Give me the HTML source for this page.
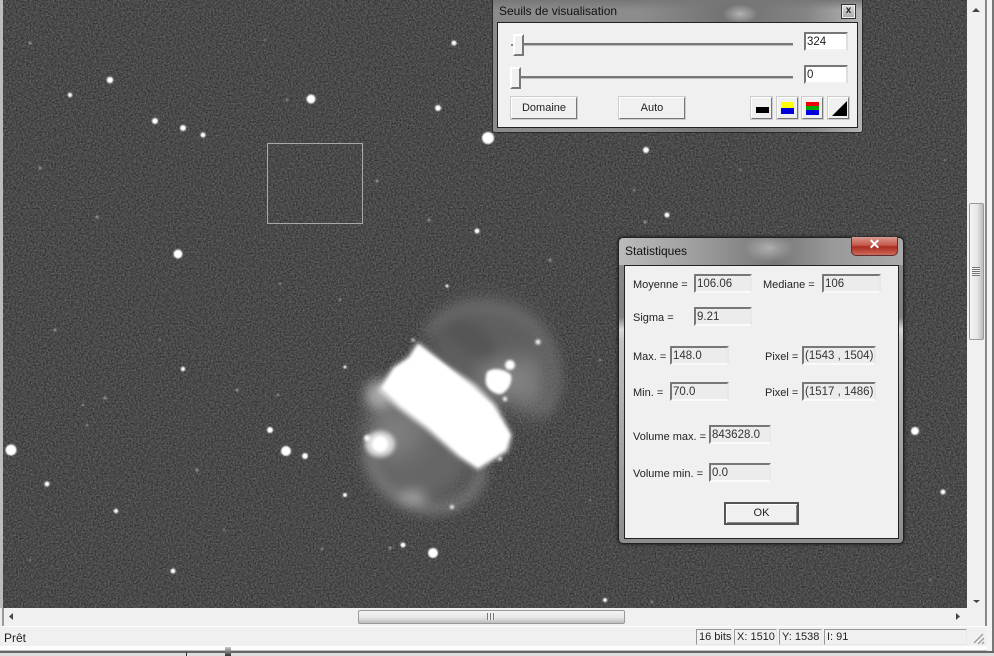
<!DOCTYPE html>
<html><head><meta charset="utf-8"><style>
html,body{margin:0;padding:0;background:#fff}
#r{position:relative;width:994px;height:656px;overflow:hidden;background:#eee;font:11px "Liberation Sans",sans-serif;color:#222}
#r div{position:absolute;box-sizing:border-box}
.t{white-space:nowrap;line-height:14px}
.l{margin-top:1px}
.f{border:2px solid;border-color:#777 #e8e8e8 #fafafa #777;background:#ececec;line-height:17px;font-size:11.5px;padding-left:1px;white-space:nowrap;overflow:hidden;color:#333}
.e{border:2px solid;border-color:#777 #ddd #f2f2f2 #777;background:#fff;line-height:17px;font-size:11.5px;padding-left:1px}
.b{background:#f0f0f0;border:2px solid;border-color:#fff #777 #777 #fff;outline:1px solid #ccc;outline-offset:-1px;text-align:center;line-height:21px}
.tk{background:#777;border-bottom:1px solid #bbb;height:3px}
.th{background:#f0f0f0;border:2px solid;border-color:#fff #777 #777 #fff;}
.p{background:#f0f0f0;border:1px solid #222}
.s{border:1px solid;border-color:#999 #e8e8e8 #e8e8e8 #999;line-height:15px;font-size:11px;padding-left:2px;overflow:hidden;white-space:nowrap;color:#222}
</style></head><body><div id="r">
<svg width="994" height="656" style="position:absolute;left:0;top:0">
<defs>
<filter id="n" x="0" y="0" width="100%" height="100%" color-interpolation-filters="sRGB">
<feTurbulence type="fractalNoise" baseFrequency="0.6" numOctaves="2" seed="4"/>
<feColorMatrix type="matrix" values="0.8 0.1 0.1 0 0 0.8 0.1 0.1 0 0 0.8 0.1 0.1 0 0 0 0 0 0 1"/>
<feComponentTransfer><feFuncR type="linear" slope="0.42" intercept="0.08"/><feFuncG type="linear" slope="0.42" intercept="0.08"/><feFuncB type="linear" slope="0.42" intercept="0.08"/></feComponentTransfer>
</filter>
<filter id="b1" x="-20%" y="-20%" width="140%" height="140%"><feGaussianBlur stdDeviation="1.2"/></filter>
<filter id="b03" x="-5%" y="-5%" width="110%" height="110%"><feGaussianBlur stdDeviation="0.7"/></filter>
<filter id="b2" x="-30%" y="-30%" width="160%" height="160%"><feGaussianBlur stdDeviation="2.5"/></filter>
<filter id="b5" x="-30%" y="-30%" width="160%" height="160%"><feGaussianBlur stdDeviation="6"/></filter>
<filter id="b9" x="-60%" y="-60%" width="220%" height="220%"><feGaussianBlur stdDeviation="11"/></filter>
</defs>
<rect x="2" y="0" width="965" height="608" fill="#4a4a4a"/>
<rect x="2" y="0" width="965" height="608" filter="url(#n)"/>
<g fill="#999" filter="url(#b03)">
<circle cx="30" cy="43" r="1.5"/><circle cx="97" cy="217" r="1.5"/><circle cx="40" cy="168" r="1.5"/><circle cx="287" cy="100" r="1.2"/><circle cx="377" cy="181" r="1.5"/><circle cx="429" cy="220" r="1.5"/><circle cx="645" cy="222" r="1.5"/><circle cx="550" cy="260" r="1.5"/><circle cx="280" cy="284" r="1.2"/><circle cx="278" cy="395" r="1.2"/><circle cx="83" cy="405" r="1.2"/><circle cx="105" cy="398" r="1.5"/><circle cx="55" cy="330" r="1.5"/><circle cx="237" cy="390" r="1.5"/><circle cx="197" cy="470" r="1.5"/><circle cx="390" cy="548" r="1.5"/><circle cx="322" cy="549" r="1.2"/><circle cx="652" cy="602" r="1.2"/><circle cx="634" cy="190" r="1.2"/><circle cx="340" cy="300" r="1.2"/><circle cx="87" cy="425" r="1.2"/><circle cx="265" cy="40" r="1"/><circle cx="160" cy="340" r="1"/><circle cx="224" cy="530" r="1"/><circle cx="560" cy="120" r="1"/><circle cx="30" cy="560" r="1"/><circle cx="600" cy="360" r="1.2"/><circle cx="590" cy="500" r="1"/><circle cx="945" cy="160" r="1"/><circle cx="930" cy="580" r="1"/><circle cx="740" cy="170" r="1"/>
</g>
<g fill="#fff" filter="url(#b03)">
<circle cx="110" cy="80" r="3.2"/><circle cx="70" cy="95" r="2.2"/><circle cx="155" cy="121" r="3"/><circle cx="183" cy="128" r="3"/><circle cx="203" cy="135" r="2.5"/><circle cx="311" cy="99" r="4.5"/><circle cx="454" cy="43" r="2.5"/><circle cx="438" cy="108" r="3"/><circle cx="488" cy="138" r="6"/><circle cx="646" cy="150" r="3"/><circle cx="178" cy="254" r="4.5"/><circle cx="477" cy="231" r="2.5"/><circle cx="667" cy="215" r="2.5"/><circle cx="11" cy="450" r="5.5"/><circle cx="47" cy="484" r="2.5"/><circle cx="116" cy="511" r="2.2"/><circle cx="270" cy="430" r="3"/><circle cx="286" cy="451" r="5"/><circle cx="305" cy="456" r="3"/><circle cx="183" cy="369" r="2.2"/><circle cx="345" cy="495" r="2"/><circle cx="403" cy="545" r="2.5"/><circle cx="433" cy="553" r="5"/><circle cx="173" cy="571" r="2.5"/><circle cx="605" cy="600" r="2"/><circle cx="915" cy="431" r="4"/><circle cx="943" cy="492" r="2.5"/><circle cx="447" cy="286" r="1.5"/><circle cx="345" cy="367" r="1.5"/>
</g>
<!-- nebula: diffuse lobes -->
<g filter="url(#b9)">
<ellipse cx="490" cy="352" rx="60" ry="54" fill="#5e5e5e"/>
<ellipse cx="420" cy="456" rx="52" ry="48" fill="#666"/>
<ellipse cx="395" cy="430" rx="28" ry="28" fill="#7d7d7d"/>
<ellipse cx="530" cy="385" rx="18" ry="30" fill="#7d7d7d"/>
<ellipse cx="500" cy="380" rx="20" ry="20" fill="#858585"/>
</g>
<g filter="url(#b5)">
<ellipse cx="470" cy="338" rx="28" ry="14" fill="#545454" transform="rotate(30 470 338)"/>
<path d="M428 335C440 305 490 298 525 320C560 345 565 395 540 415" fill="none" stroke="#707070" stroke-width="8"/>
<path d="M368 450C375 490 410 510 440 508C465 505 480 490 482 468" fill="none" stroke="#808080" stroke-width="9"/>
<ellipse cx="380" cy="395" rx="15" ry="15" fill="#a8a8a8"/>
<ellipse cx="412" cy="497" rx="14" ry="7" fill="#a0a0a0"/>
</g>
<g filter="url(#b2)">
<ellipse cx="380" cy="444" rx="15" ry="13" fill="#dcdcdc"/>
<polygon points="418,342 445,364 475,384 496,405 512,435 508,451 478,470 457,456 427,430 397,408 378,390 392,368 408,357" fill="#ddd"/>
</g>
<g filter="url(#b1)" fill="#fff">
<polygon points="418,345 445,365 470,385 492,405 510,435 505,450 478,467 460,455 430,428 400,405 382,388 395,368 410,358"/>
<path d="M487 372c6-5 18-3 24 3c2 8-4 17-10 19c-5 1-13-4-15-10c-1-5 0-9 1-12z"/>
<circle cx="510" cy="365" r="5"/>
<circle cx="380" cy="444" r="8"/>
<circle cx="367" cy="438" r="3"/>
<circle cx="505" cy="399" r="2.2"/>
<circle cx="538" cy="342" r="2.5"/>
<circle cx="500" cy="459" r="1.8"/>
<circle cx="452" cy="507" r="2"/>
<circle cx="413" cy="340" r="1.5"/>
</g>
<rect x="267.500" y="143.500" width="95" height="80" fill="none" stroke="#a8a8a8"/>
</svg>

<!-- window frame -->
<div style="left:0;top:0;width:3px;height:608px;background:#bcbcbc"></div>
<div style="left:967px;top:0;width:18px;height:609px;background:#f0f0f0"></div>
<div style="left:985px;top:0;width:2px;height:646px;background:#8a8a8a"></div>
<div style="left:987px;top:0;width:5px;height:650px;background:#f4f4f4"></div>
<div style="left:992px;top:0;width:2px;height:656px;background:#777"></div>
<div style="left:969px;top:203px;width:15px;height:137px;border:1px solid #999;border-radius:2px;background:linear-gradient(90deg,#f4f4f4,#e6e6e6 55%,#bbb)"></div>
<div style="left:972px;top:267px;width:8px;height:9px;background:repeating-linear-gradient(#777 0 1px,#eee 1px 2px)"></div>
<svg width="994" height="656" style="position:absolute;left:0;top:0;pointer-events:none">
<path d="M972 12l4-4 4 4z" fill="#444"/><path d="M973 600l3.500 3 3.500-3z" fill="#444"/>
</svg>
<div style="left:3px;top:608px;width:982px;height:18px;background:#f0f0f0"></div>
<svg width="994" height="30" style="position:absolute;left:0;top:606px">
<path d="M13 7v7l-4-3.500z" fill="#444"/><path d="M956 7v7l4-3.500z" fill="#444"/>
</svg>
<div style="left:358px;top:610px;width:267px;height:14px;border:1px solid #999;border-radius:2px;background:linear-gradient(#f4f4f4,#e6e6e6 55%,#bbb)"></div>
<div style="left:487px;top:613px;width:8px;height:7px;background:repeating-linear-gradient(90deg,#777 0 1px,#eee 1px 3px)"></div>
<div style="left:1px;top:626px;width:986px;height:20px;background:#f0f0f0;border-top:1px solid #fff"></div>
<div style="left:2px;top:608px;width:2px;height:18px;background:#999"></div>
<div style="left:0;top:646px;width:987px;height:5px;background:#fdfdfd;border-bottom:1px solid #bbb"></div>
<div style="left:0;top:651px;width:994px;height:2px;background:#666"></div>
<div style="left:0;top:653px;width:994px;height:3px;background:#ddd"></div>
<div style="left:186px;top:652px;width:1px;height:4px;background:#333"></div>
<div style="left:225px;top:647px;width:6px;height:9px;background:linear-gradient(#ccc,#333)"></div>
<div class="t l" style="left:4px;top:630px;font-size:12px">Prêt</div>
<div class="s" style="left:696px;top:629px;width:36px;height:16px">16 bits</div>
<div class="s" style="left:734px;top:629px;width:43px;height:16px">X: 1510</div>
<div class="s" style="left:779px;top:629px;width:43px;height:16px">Y: 1538</div>
<div class="s" style="left:824px;top:629px;width:143px;height:16px">I: 91</div>
<svg width="20" height="20" style="position:absolute;left:968px;top:628px"><path d="M6 15l9-9M10 16l6-6M14 16l2-2" stroke="#999" stroke-width="1.300"/></svg>

<!-- Dialog 1 -->
<div style="left:492px;top:-4px;width:371px;height:137px;border:1px solid #2a2a2a;border-radius:3px;background:linear-gradient(90deg,#8a8a8a,#8c8c8c 40%,#707070 65%,#858585 85%,#b5b5b5)"></div>
<div style="left:493px;top:0;width:369px;height:22px;background:radial-gradient(ellipse 18px 10px at 247px 14px,rgba(220,220,220,.6),transparent),linear-gradient(#777,transparent 45%)"></div>
<div class="t" style="left:499px;top:4px;font-size:12px;color:#111">Seuils de visualisation</div>
<div style="left:841px;top:4px;width:15px;height:15px;border:1px solid #333;background:linear-gradient(#ddd,#aaa);box-shadow:inset 0 0 0 1px #eee;text-align:center;font:bold 10px/12px 'Liberation Sans',sans-serif;color:#222">x</div>
<div class="p" style="left:497px;top:22px;width:361px;height:106px"></div>
<div class="tk" style="left:519px;top:43px;width:274px"></div>
<div style="left:511px;top:44px;width:2px;height:2px;background:#888"></div>
<div class="th" style="left:513px;top:34px;width:11px;height:22px"></div>
<div class="tk" style="left:515px;top:76px;width:278px"></div>
<div class="th" style="left:510px;top:67px;width:11px;height:22px"></div>
<div class="e" style="left:804px;top:32px;width:44px;height:19px">324</div>
<div class="e" style="left:804px;top:65px;width:44px;height:19px">0</div>
<div class="b" style="left:510px;top:96px;width:68px;height:24px">Domaine</div>
<div class="b" style="left:618px;top:96px;width:68px;height:24px">Auto</div>
<div class="b" style="left:750px;top:96px;width:23px;height:24px"><div style="left:4px;top:9px;width:13px;height:6px;background:#000"></div></div>
<div class="b" style="left:776px;top:96px;width:23px;height:24px"><div style="left:3px;top:4px;width:13px;height:6px;background:#ff0"></div><div style="left:3px;top:10px;width:13px;height:6px;background:#00d"></div></div>
<div class="b" style="left:801px;top:96px;width:23px;height:24px"><div style="left:3px;top:4px;width:13px;height:4px;background:#e00"></div><div style="left:3px;top:8px;width:13px;height:4px;background:#0a0"></div><div style="left:3px;top:12px;width:13px;height:5px;background:#00d"></div></div>
<div class="b" style="left:827px;top:96px;width:23px;height:24px"><svg width="17" height="17" style="position:absolute;left:2px;top:2px"><path d="M1 16L16 1V16z" fill="#000"/></svg></div>

<!-- Dialog 2 -->
<div style="left:618px;top:237px;width:286px;height:307px;border:1px solid #222;border-radius:5px;background:linear-gradient(#a8a8a8,#8a8a8a 8%,#808080 26%,#d8d8d8 30%,#c0c0c0 34%,#aaa 60%,#8c8c8c);box-shadow:0 0 3px #111"></div>
<div style="left:619px;top:238px;width:284px;height:27px;border-radius:5px 5px 0 0;background:radial-gradient(ellipse 25px 14px at 150px 10px,rgba(210,210,210,.6),transparent),linear-gradient(90deg,#bbb,#a0a0a0 25%,#777 55%,#999 75%,#aaa)"></div>
<div class="t" style="left:625px;top:244px;font-size:12px;color:#111">Statistiques</div>
<div style="left:851px;top:237px;width:47px;height:19px;border:1px solid #5a3030;border-top:0;border-radius:0 0 5px 5px;background:linear-gradient(#d89a90,#c65a4c 45%,#a92c20 55%,#cf6a58);text-align:center;font:bold 14px/15px 'Liberation Sans',sans-serif;color:#fff">✕</div>
<div class="p" style="left:624px;top:265px;width:275px;height:274px"></div>
<div class="t l" style="left:633px;top:277px">Moyenne =</div>
<div class="f" style="left:694px;top:274px;width:58px;height:19px">106.06</div>
<div class="t l" style="left:763px;top:277px">Mediane =</div>
<div class="f" style="left:822px;top:274px;width:59px;height:19px">106</div>
<div class="t l" style="left:633px;top:310px">Sigma =</div>
<div class="f" style="left:694px;top:307px;width:58px;height:19px">9.21</div>
<div class="t l" style="left:633px;top:349px">Max. =</div>
<div class="f" style="left:670px;top:346px;width:59px;height:19px">148.0</div>
<div class="t l" style="left:765px;top:349px">Pixel =</div>
<div class="f" style="left:802px;top:346px;width:74px;height:19px">(1543 , 1504)</div>
<div class="t l" style="left:633px;top:385px">Min. =</div>
<div class="f" style="left:670px;top:382px;width:59px;height:19px">70.0</div>
<div class="t l" style="left:765px;top:385px">Pixel =</div>
<div class="f" style="left:802px;top:382px;width:74px;height:19px">(1517 , 1486)</div>
<div class="t l" style="left:633px;top:429px">Volume max. =</div>
<div class="f" style="left:709px;top:425px;width:62px;height:19px">843628.0</div>
<div class="t l" style="left:633px;top:466px">Volume min. =</div>
<div class="f" style="left:709px;top:463px;width:62px;height:19px">0.0</div>
<div class="b" style="left:724px;top:502px;width:75px;height:23px;border-color:#555;box-shadow:inset 1px 1px 0 #fff,inset -1px -1px 0 #888;line-height:19px;outline:0">OK</div>
</div></body></html>
